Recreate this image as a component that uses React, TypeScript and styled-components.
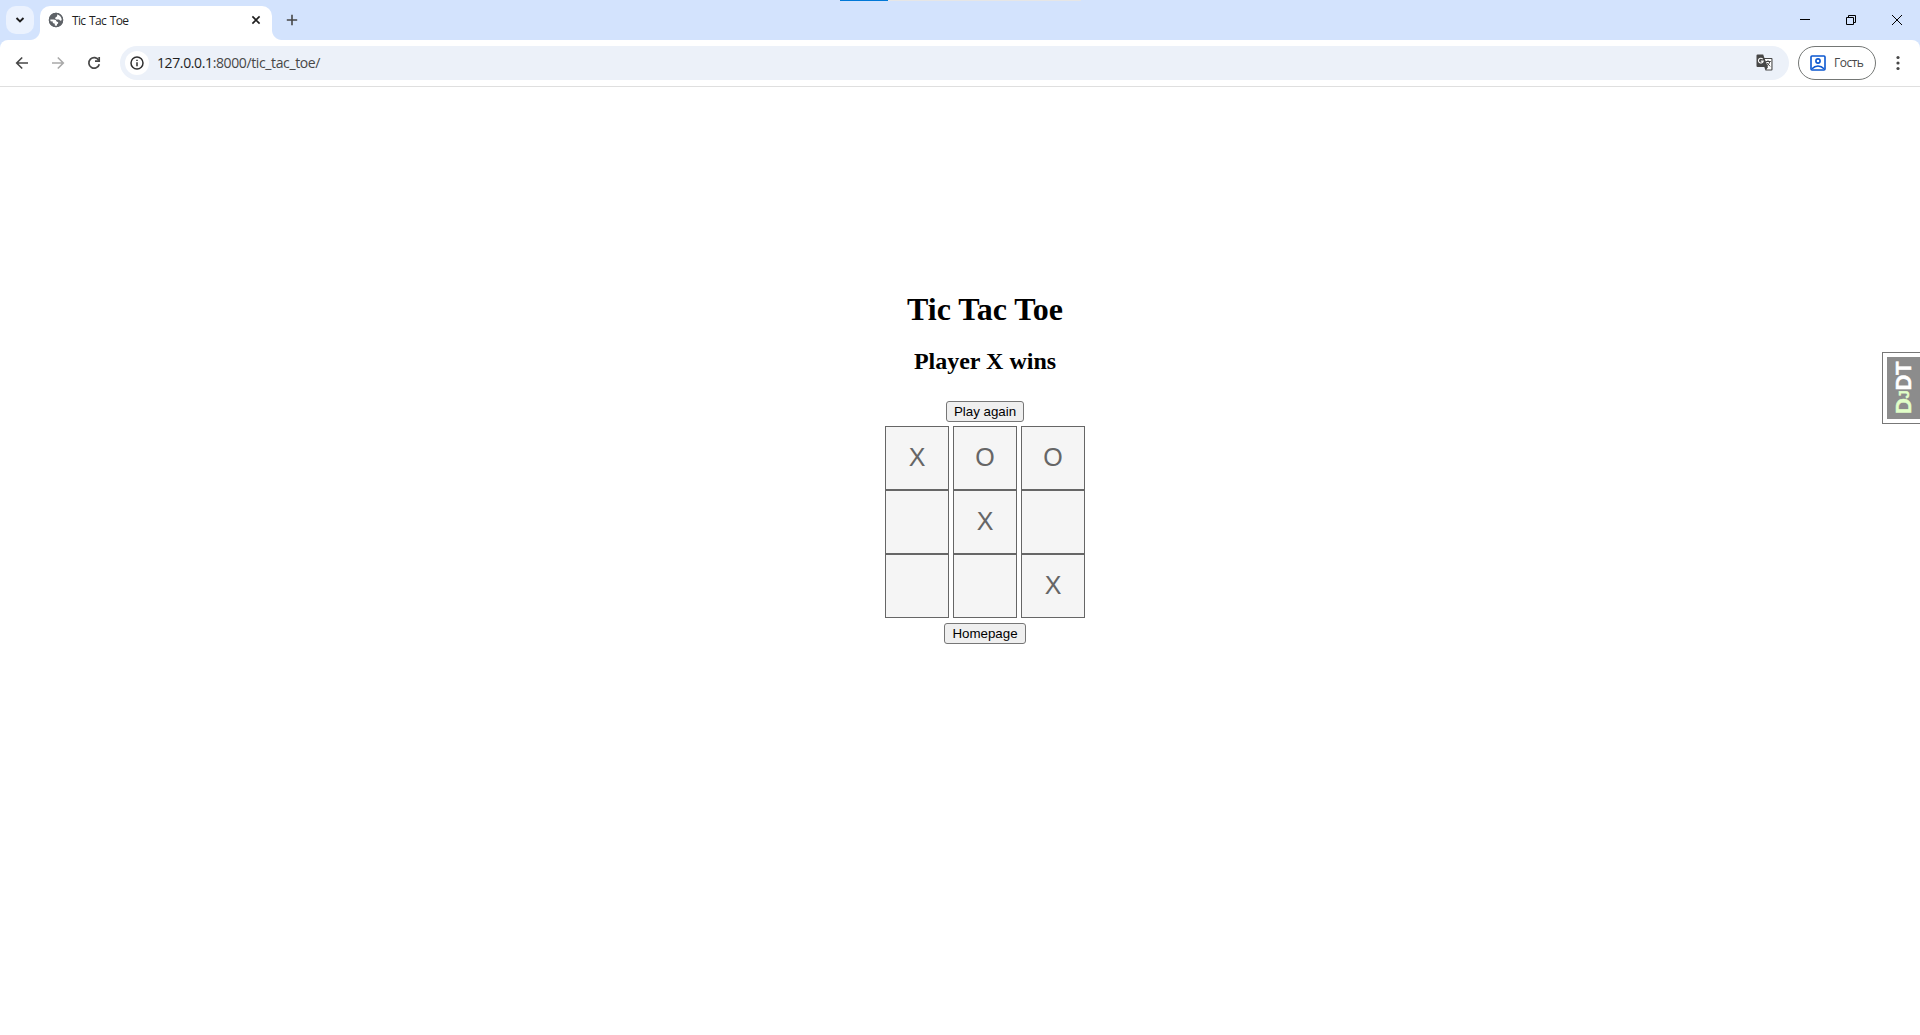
import React from "react";
import styled, { createGlobalStyle } from "styled-components";

const GlobalStyle = createGlobalStyle`
  * { box-sizing: border-box; }
  body { margin: 0; background: #fff; }
`;

const Window = styled.div`
  width: 100%;
  height: 100vh;
  display: flex;
  flex-direction: column;
  overflow: hidden;
  position: relative;
  background: #fff;
  font-family: "Open Sans", "Noto Sans", sans-serif;
`;

const TabStrip = styled.div`
  height: 40px;
  flex: none;
  display: flex;
  align-items: flex-start;
  background: #d3e3fd;
`;

const TabSearch = styled.div`
  width: 28px;
  height: 28px;
  margin: 6px 6px 0;
  border-radius: 10px;
  background: #ebf2fe;
  display: flex;
  align-items: center;
  justify-content: center;
`;

const Tab = styled.div`
  position: relative;
  width: 232px;
  height: 34px;
  margin-top: 6px;
  padding: 0 11px 6px 8px;
  border-radius: 10px 10px 0 0;
  background: #fff;
  display: flex;
  align-items: center;

  &::before,
  &::after {
    content: "";
    position: absolute;
    bottom: 0;
    width: 10px;
    height: 10px;
  }
  &::before {
    left: -10px;
    background: radial-gradient(circle at 0 0, transparent 9.5px, #fff 10.5px);
  }
  &::after {
    right: -10px;
    background: radial-gradient(circle at 100% 0, transparent 9.5px, #fff 10.5px);
  }
`;

const TabTitle = styled.span`
  flex: 1;
  margin-left: 8px;
  padding-top: 1px;
  font-size: 12px;
  line-height: 16px;
  letter-spacing: -0.65px;
  word-spacing: 1.2px;
  color: #1f1f1f;
`;

const NewTab = styled.div`
  width: 28px;
  height: 28px;
  margin: 6px 0 0 6px;
  display: flex;
  align-items: center;
  justify-content: center;
`;

const Spacer = styled.div`
  flex: 1;
`;

const WindowControls = styled.div`
  display: flex;
  height: 40px;
`;

const WindowButton = styled.div`
  width: 46px;
  display: flex;
  align-items: center;
  justify-content: center;
`;

const ProgressStrip = styled.div`
  position: absolute;
  top: 0;
  left: 840px;
  width: 241px;
  height: 1px;
  background: linear-gradient(to right, #0078d7 48px, #e6e6e6 48px);
`;

const ToolbarBacking = styled.div`
  flex: none;
  background: #d3e3fd;
`;

const Toolbar = styled.div`
  height: 47px;
  padding: 0 12px 1px 4px;
  border-bottom: 1px solid #dfdfdf;
  border-radius: 8px 8px 0 0;
  background: #fff;
  display: flex;
  align-items: center;
`;

const NavButton = styled.div`
  width: 36px;
  height: 36px;
  display: flex;
  align-items: center;
  justify-content: center;
`;

const AddressBar = styled.div`
  flex: 1;
  height: 34px;
  margin-left: 8px;
  padding: 0 16px 0 5px;
  border-radius: 17px;
  background: #ecf1f9;
  display: flex;
  align-items: center;
`;

const SiteInfo = styled.div`
  width: 24px;
  height: 24px;
  border-radius: 50%;
  background: #fff;
  display: flex;
  align-items: center;
  justify-content: center;
`;

const Url = styled.span`
  flex: 1;
  margin-left: 8px;
  font-size: 14px;
  line-height: 20px;
  letter-spacing: -0.38px;
  color: #474747;

  b {
    font-weight: 400;
    color: #1f1f1f;
  }
`;

const Profile = styled.div`
  width: 78px;
  height: 34px;
  margin: 0 12px 0 9px;
  padding-left: 11px;
  border: 1px solid #747775;
  border-radius: 17px;
  display: flex;
  align-items: center;
  gap: 8px;
  font-size: 12px;
  letter-spacing: -0.5px;
  color: #474747;
`;

const Page = styled.main`
  flex: 1;
  padding: 204px 0 0 50px;
  display: flex;
  flex-direction: column;
  align-items: center;
  font-family: "Liberation Serif", "Times New Roman", serif;
  color: #000;
`;

const Title = styled.h1`
  margin: 0;
  font-size: 32px;
  line-height: 37px;
`;

const Status = styled.h2`
  margin: 20px 0 26px;
  font-size: 24px;
  line-height: 27px;
`;

const ActionButton = styled.button<{ $width: number }>`
  width: ${(p) => p.$width}px;
  height: 21px;
  padding: 0;
  border: 1px solid #767676;
  border-radius: 3px;
  background: #efefef;
  color: #000;
  font: 13.333px "Liberation Sans", Arial, sans-serif;
  line-height: 18px;
`;

const Board = styled.div`
  display: grid;
  grid-template-columns: repeat(3, 64px);
  grid-auto-rows: 64px;
  column-gap: 4px;
  margin: 4px 0 5px;
`;

const Cell = styled.div`
  padding-bottom: 2px;
  border: 1px solid #666;
  background: #f5f5f5;
  color: #666;
  font: 25px "Liberation Sans", Arial, sans-serif;
  display: flex;
  align-items: center;
  justify-content: center;
`;

const DebugHandle = styled.aside`
  position: absolute;
  top: 352px;
  right: 0;
  width: 38px;
  height: 72px;
  padding: 4px 0 4px 4px;
  border: 1px solid #777;
  border-right: 0;
  background: #fff;
`;

const DebugLabel = styled.div`
  height: 62px;
  background: #8c8c8c;
  color: #fff;
  font: bold 22px/33px "Liberation Sans", Arial, sans-serif;
  letter-spacing: -0.4px;
  -webkit-text-stroke: 0.4px currentColor;
  writing-mode: vertical-rl;
  transform: rotate(180deg);
  text-align: center;
  white-space: nowrap;

  span {
    color: #e1ffc8;
  }
  small {
    font-size: 15px;
  }
`;

const cells = ["X", "O", "O", "", "X", "", "", "", "X"];

const Globe = () => (
  <svg width="16" height="16" viewBox="0 0 16 16">
    <circle cx="8" cy="8" r="7.2" fill="#5f6368" />
    <path d="M9 1.8 12.5 3.2 14 6.4 13.9 8.2 12.3 8.7 11 7.6 8.4 7.4Q7 7.3 7.2 6 7.4 4.9 8.7 4.7 9.5 4.2 9 1.8Z" fill="#fff" />
    <path d="M2 7.6H5.6Q8.4 7.6 8.6 9.6L10.2 10.3Q10.5 12 9 12.3V14L6.8 13.9V11.8L4.8 10.9V9.5L2.2 9.2Z" fill="#fff" />
    <circle cx="8" cy="8" r="6.5" fill="none" stroke="#5f6368" strokeWidth="1.5" />
  </svg>
);

const Arrow = ({ forward = false }: { forward?: boolean }) => (
  <svg width="14" height="14" viewBox="0 0 14 14" fill="none" stroke={forward ? "#a9a9a9" : "#474747"} strokeWidth="1.6">
    <path d={forward ? "M1 7H12M6.8 1.5 12.3 7 6.8 12.5" : "M13 7H2M7.2 1.5 1.7 7 7.2 12.5"} />
  </svg>
);

const Reload = () => (
  <svg width="14" height="14" viewBox="0 0 14 14" fill="none" stroke="#474747" strokeWidth="1.7">
    <path d="M11.8 4.3A5.3 5.3 0 1 0 12.3 8.2" />
    <path d="M12.2 1V5.1H8" />
  </svg>
);

const Translate = () => (
  <svg width="17" height="17" viewBox="0 0 17 17">
    <path d="M1.5.5H7.2L8.4 4H15.5Q16.5 4 16.5 5V15.5Q16.5 16.5 15.5 16.5H9.5L8.3 13H1.5Q.5 13 .5 12V1.5Q.5.5 1.5.5Z" fill="#474747" />
    <path d="M8.8 5H15.4V15.4H10.3L12 13.3Z" fill="#fff" />
    <path d="M6.7 5.1A2.4 2.4 0 1 0 7.2 7.1H4.8" fill="none" stroke="#fff" strokeWidth="1.1" />
    <path d="M9.5 7.5H14.8M12 6.2V7.5M13.9 7.5Q13.2 10.2 10.8 12M10.7 8.8 14.2 12.4" fill="none" stroke="#474747" />
  </svg>
);

const Person = () => (
  <svg width="16" height="16" viewBox="0 0 16 16" fill="none" stroke="#0b57d0" strokeWidth="1.6">
    <rect x="1" y="1" width="14" height="14" rx="1" />
    <circle cx="8" cy="6" r="2.1" />
    <path d="M2 13.8Q4.6 11 8 11T14 13.8" />
  </svg>
);

export default function App() {
  return (
    <Window>
      <GlobalStyle />
      <TabStrip>
        <TabSearch>
          <svg width="10" height="8" viewBox="0 0 10 8" fill="none" stroke="#1f1f1f" strokeWidth="1.9">
            <path d="M1.5 2 5 5.5 8.5 2" />
          </svg>
        </TabSearch>
        <Tab>
          <Globe />
          <TabTitle>Tic Tac Toe</TabTitle>
          <svg width="10" height="10" viewBox="0 0 10 10" stroke="#1f1f1f" strokeWidth="1.6">
            <path d="M1.4 1.4 8.6 8.6M8.6 1.4 1.4 8.6" />
          </svg>
        </Tab>
        <NewTab>
          <svg width="12" height="12" viewBox="0 0 12 12" stroke="#474747" strokeWidth="1.6">
            <path d="M6 .8V11.2M.8 6H11.2" />
          </svg>
        </NewTab>
        <Spacer />
        <WindowControls>
          <WindowButton>
            <svg width="10" height="10" viewBox="0 0 10 10" stroke="#000">
              <path d="M0 4.5H10" />
            </svg>
          </WindowButton>
          <WindowButton>
            <svg width="10" height="10" viewBox="0 0 10 10" fill="none" stroke="#000">
              <path d="M.5 2.5H7.5V9.5H.5ZM2.5 2.5V.5H9.5V7.5H7.5" />
            </svg>
          </WindowButton>
          <WindowButton>
            <svg width="10" height="10" viewBox="0 0 10 10" stroke="#000">
              <path d="M0 0 10 10M10 0 0 10" />
            </svg>
          </WindowButton>
        </WindowControls>
      </TabStrip>
      <ProgressStrip />
      <ToolbarBacking>
        <Toolbar>
          <NavButton><Arrow /></NavButton>
          <NavButton><Arrow forward /></NavButton>
          <NavButton><Reload /></NavButton>
          <AddressBar>
            <SiteInfo>
              <svg width="14" height="14" viewBox="0 0 14 14" fill="none" stroke="#303030" strokeWidth="1.5">
                <circle cx="7" cy="7" r="6" />
                <path d="M7 6.2V10.3M7 3.7V5.1" />
              </svg>
            </SiteInfo>
            <Url><b>127.0.0.1</b>:8000/tic_tac_toe/</Url>
            <Translate />
          </AddressBar>
          <Profile><Person />Гость</Profile>
          <svg width="20" height="16" viewBox="0 0 20 16" fill="#474747">
            <circle cx="10" cy="2.5" r="1.6" />
            <circle cx="10" cy="8" r="1.6" />
            <circle cx="10" cy="13.5" r="1.6" />
          </svg>
        </Toolbar>
      </ToolbarBacking>
      <Page>
        <Title>Tic Tac Toe</Title>
        <Status>Player X wins</Status>
        <ActionButton $width={78}>Play again</ActionButton>
        <Board>
          {cells.map((mark, i) => (
            <Cell key={i}>{mark}</Cell>
          ))}
        </Board>
        <ActionButton $width={82}>Homepage</ActionButton>
      </Page>
      <DebugHandle>
        <DebugLabel><span>D<small>J</small></span>DT</DebugLabel>
      </DebugHandle>
    </Window>
  );
}
